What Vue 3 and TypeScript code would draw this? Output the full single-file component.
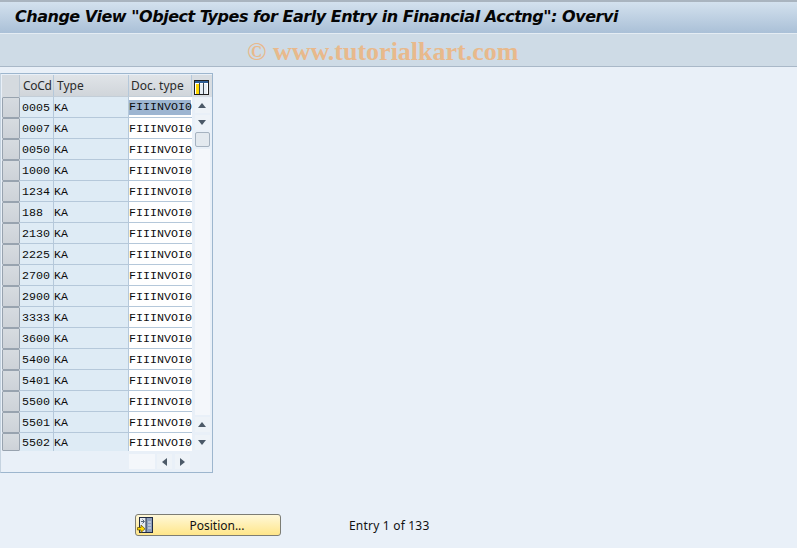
<script setup lang="ts">
const rows: string[] = [
  '0005', '0007', '0050', '1000', '1234', '188', '2130', '2225', '2700',
  '2900', '3333', '3600', '5400', '5401', '5500', '5501', '5502',
]
</script>

<template>
  <div class="screen">
    <header class="titlebar">
      <h1>Change View "Object Types for Early Entry in Financial Acctng": Overvi</h1>
    </header>
    <div class="toolbar">
      <span class="watermark">© www.tutorialkart.com</span>
    </div>

    <main class="content">
      <section class="table-panel">
        <div class="table-main">
          <div class="table-grid">
            <div class="row head">
              <div class="sel"></div>
              <div class="cell cocd">CoCd</div>
              <div class="cell type">Type</div>
              <div class="cell doc">Doc. type</div>
            </div>
            <div v-for="(code, i) in rows" :key="code" class="row" :class="{ last: i === rows.length - 1 }">
              <div class="sel"><span class="sel-btn"></span></div>
              <div class="cell cocd mono">{{ code }}</div>
              <div class="cell type mono">KA</div>
              <div class="cell doc mono input"><span :class="{ selected: i === 0 }">FIIINVOI0</span></div>
            </div>
          </div>
          <div class="scroll-col">
            <button class="col-config" aria-label="Table settings">
              <svg width="15" height="15" viewBox="0 0 15 15">
                <rect x="0.500" y="0.500" width="14" height="14" fill="#fff" stroke="#1f1f1f" />
                <rect x="1" y="1" width="13" height="2" fill="#2f5f96" />
                <rect x="2" y="4" width="3" height="10" fill="#ffd800" />
                <rect x="6" y="4" width="3" height="10" fill="#e6edf3" />
                <rect x="10" y="4" width="3" height="10" fill="#e6edf3" />
                <path d="M5.500 3v11M9.500 3v11" stroke="#3c4650" fill="none" />
              </svg>
            </button>
            <div class="vscroll">
              <span class="sbtn"><i class="tri up"></i></span>
              <span class="sbtn"><i class="tri down"></i></span>
              <span class="thumb"></span>
              <span class="track"></span>
              <span class="sbtn"><i class="tri up"></i></span>
              <span class="sbtn push"><i class="tri down"></i></span>
            </div>
          </div>
        </div>
        <div class="hscroll">
          <span class="htrack"></span>
          <span class="sbtn"><i class="tri left"></i></span>
          <span class="sbtn push-left"><i class="tri right"></i></span>
        </div>
      </section>

      <div class="footer">
        <button class="position-btn">
          <svg class="pos-icon" width="16" height="17" viewBox="0 0 16 17">
            <rect x="2.500" y="0.500" width="13" height="15" fill="#e4e9f0" stroke="#1f2a44" />
            <rect x="9" y="1" width="6" height="14" fill="#8c9dbc" />
            <path d="M9 1v14" stroke="#1f2a44" fill="none" />
            <path d="M11 5h3M11 8h3M11 11h3" stroke="#e4e9f0" fill="none" />
            <path d="M4 4.500h3M5.500 2.500l2 2-2 2" stroke="#56657a" fill="none" />
            <path d="M0.500 10.500h3.500V8l4 3.800-4 3.700v-2.500H0.500z" fill="#ffd800" stroke="#5b4a00" stroke-width="0.700" />
          </svg>
          <span>Position...</span>
        </button>
        <span class="entry">Entry 1 of 133</span>
      </div>
    </main>
  </div>
</template>

<style>
html,
body {
  margin: 0;
  background: #e9f0f8;
}
</style>

<style scoped>
.screen {
  width: 797px;
  height: 548px;
  overflow: hidden;
  background: #e9f0f8;
  font-family: Tahoma, "Noto Sans", sans-serif;
  color: #111;
  display: flex;
  flex-direction: column;
}

.titlebar {
  box-sizing: border-box;
  height: 34px;
  border-top: 2px solid #a9b4bf;
  border-bottom: 1px solid #e4ecf3;
  background: linear-gradient(#d3e1ee, #aac0d7);
  padding: 0 0 2px 15px;
  display: flex;
  align-items: center;
}

.titlebar h1 {
  margin: 0;
  font: italic bold 16px "DejaVu Sans", sans-serif;
  letter-spacing: -0.48px;
  white-space: nowrap;
  color: #050505;
}

.toolbar {
  box-sizing: border-box;
  height: 33px;
  background: #cedbe6;
  border-bottom: 1px solid #a9b8c8;
  padding: 3px 0 0 247px;
  display: flex;
  align-items: center;
}

.watermark {
  font: bold 26px "Liberation Serif", serif;
  color: #e8b98c;
  white-space: nowrap;
}

.content {
  flex: 1;
  display: flex;
  flex-direction: column;
  padding-top: 6px;
}

.table-panel {
  box-sizing: border-box;
  width: 213px;
  height: 400px;
  border: 1px solid #9db6ce;
  border-left-color: #c5d3e0;
  padding: 1px 0 0 1px;
  background: #e9f0f8;
}

.table-main {
  display: flex;
}

.table-grid {
  width: 190px;
  height: 376px;
  flex: none;
  overflow: hidden;
}

.row {
  display: flex;
  height: 21px;
}

.row.head {
  height: 22px;
}

.row.last {
  height: 18px;
}

.sel {
  box-sizing: border-box;
  width: 18px;
  flex: none;
}

.head .sel {
  background: #d5dadf;
  border-right: 1px solid #bcc8d4;
}

.sel-btn {
  display: block;
  box-sizing: border-box;
  height: 100%;
  background: linear-gradient(#d6dbe0, #cdd2d8);
  border: 1px solid #98a3af;
  border-radius: 1px;
}

.cell {
  box-sizing: border-box;
  padding-left: 2px;
  padding-top: 1px;
  display: flex;
  align-items: center;
  flex: none;
  overflow: hidden;
  white-space: nowrap;
  font-size: 12px;
  color: #222;
  background: #deebf5;
  border-right: 1px solid #b5c8da;
  border-bottom: 1px solid #b5c8da;
}

.last .cell {
  border-bottom: none;
}

.head .cell {
  background: linear-gradient(#e0e4e8, #d0d5da);
  border-bottom: 1px solid #c3ced8;
  padding-top: 0;
  color: #2b2b2b;
}

.head .cocd {
  padding-left: 3px;
  letter-spacing: -0.3px;
}

.cocd {
  width: 34px;
}

.type {
  width: 75px;
  padding-left: 0;
}

.head .type {
  padding-left: 3px;
}

.doc {
  width: 63px;
  padding-left: 2px;
}

.mono {
  font-family: "Liberation Mono", monospace;
  font-size: 11.67px;
  color: #0c0c0c;
}

.input {
  background: #fff;
  border-right: none;
  padding-left: 0;
}

.selected {
  background: #9db5d1;
  display: block;
  line-height: 15px;
  width: 62px;
}

.scroll-col {
  width: 20px;
  flex: none;
  display: flex;
  flex-direction: column;
}

.col-config {
  height: 22px;
  padding: 2px 0 0 2px;
  border: none;
  background: #d8dde2;
  display: block;
  text-align: left;
}

.col-config svg {
  display: block;
}

.vscroll {
  display: flex;
  flex-direction: column;
  align-items: center;
  gap: 2px;
  padding-top: 1px;
}

.sbtn {
  box-sizing: border-box;
  width: 15px;
  height: 15px;
  background: #eef3f8;
  display: flex;
  align-items: center;
  justify-content: center;
  flex: none;
}

.sbtn.push {
  margin-top: 1px;
}

.sbtn.push-left {
  margin-left: 1px;
}

.tri {
  display: block;
  width: 0;
  height: 0;
  border: 4px solid transparent;
}

.tri.up {
  border-top: none;
  border-bottom: 5px solid #4d5a68;
}

.tri.down {
  border-bottom: none;
  border-top: 5px solid #4d5a68;
}

.tri.left {
  border-left: none;
  border-right: 5px solid #4d5a68;
}

.tri.right {
  border-right: none;
  border-left: 5px solid #4d5a68;
}

.thumb {
  box-sizing: border-box;
  width: 15px;
  height: 15px;
  background: #e3e9ef;
  border: 1px solid #a5b2c0;
  border-radius: 2px;
  flex: none;
}

.track {
  width: 15px;
  height: 266px;
  background: #f4f7fb;
  flex: none;
}

.hscroll {
  display: flex;
  gap: 2px;
  padding-left: 127px;
  padding-top: 3px;
}

.htrack {
  width: 26px;
  height: 15px;
  background: #f4f7fb;
}

.footer {
  display: flex;
  align-items: center;
  height: 22px;
  margin-top: 41px;
  padding-left: 135px;
}

.position-btn {
  box-sizing: border-box;
  position: relative;
  width: 146px;
  height: 22px;
  padding: 0 0 0 18px;
  border: 1px solid #7d7d74;
  border-radius: 3px;
  background: linear-gradient(#fff8d8, #ffe68a);
  font: 12px Tahoma, "Noto Sans", sans-serif;
  color: #111;
}

.pos-icon {
  position: absolute;
  left: 1px;
  top: 2px;
}

.entry {
  margin-left: 68px;
  font-size: 12px;
  letter-spacing: 0.2px;
  color: #111;
}
</style>
